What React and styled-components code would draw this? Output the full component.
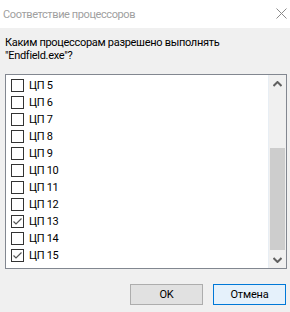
import React from 'react';
import styled, { createGlobalStyle } from 'styled-components';

const FONT = 'Roboto, "Noto Sans", "Liberation Sans", sans-serif';

const Global = createGlobalStyle`
    html, body {
        margin: 0;
        padding: 0;
        background: #f0f0f0;
    }
    body {
        font-family: ${FONT};
        font-size: 11px;
        letter-spacing: -0.3px;
    }
`;

const cpus = [
    { n: 5, on: false },
    { n: 6, on: false },
    { n: 7, on: false },
    { n: 8, on: false },
    { n: 9, on: false },
    { n: 10, on: false },
    { n: 11, on: false },
    { n: 12, on: false },
    { n: 13, on: true },
    { n: 14, on: false },
    { n: 15, on: true },
];

const App = () => {
    return (
        <Window>
            <Global />
            <TitleBar>
                <Title>Соответствие процессоров</Title>
                <Close>
                    <svg width="11" height="11" viewBox="0 0 11 11">
                        <path d="M0.5 0.5 L10.5 10.5 M10.5 0.5 L0.5 10.5" stroke="#8a8a8a" strokeWidth="1" fill="none" />
                    </svg>
                </Close>
            </TitleBar>
            <Body>
                <Label>
                    <div>Каким процессорам разрешено выполнять</div>
                    <div>"Endfield.exe"?</div>
                </Label>
                <ListBox>
                    <Items>
                        {cpus.map((c) => (
                            <Row key={c.n}>
                                <Box>
                                    {c.on && (
                                        <svg width="11" height="11" viewBox="0 0 11 11">
                                            <path d="M1.5 5.5 L4 8 L9.5 2.5" stroke="#555" strokeWidth="1.2" fill="none" />
                                        </svg>
                                    )}
                                </Box>
                                <span>ЦП {c.n}</span>
                            </Row>
                        ))}
                    </Items>
                    <ScrollBar>
                        <Arrow>
                            <svg width="9" height="6" viewBox="0 0 9 6">
                                <path d="M0.5 5 L4.5 1 L8.5 5" stroke="#606060" strokeWidth="2" fill="none" />
                            </svg>
                        </Arrow>
                        <Track>
                            <Thumb />
                        </Track>
                        <Arrow>
                            <svg width="9" height="6" viewBox="0 0 9 6">
                                <path d="M0.5 1 L4.5 5 L8.5 1" stroke="#606060" strokeWidth="2" fill="none" />
                            </svg>
                        </Arrow>
                    </ScrollBar>
                </ListBox>
                <Footer>
                    <Button>OK</Button>
                    <Button $focused>Отмена</Button>
                </Footer>
            </Body>
        </Window>
    );
};

const Window = styled.div`
    width: 290px;
    height: 312px;
    display: flex;
    flex-direction: column;
    background: #f0f0f0;
`;

const TitleBar = styled.div`
    height: 28px;
    background: #fff;
    display: flex;
    align-items: center;
    justify-content: space-between;
    padding: 0 3px 0 3px;
`;

const Title = styled.div`
    color: #a0a0a0;
    font-size: 11px;
    letter-spacing: -0.4px;
`;

const Close = styled.div`
    display: flex;
    align-items: center;
    margin-top: -2px;
`;

const Body = styled.div`
    flex: 1;
    display: flex;
    flex-direction: column;
    padding: 8px 3px 0 5px;
`;

const Label = styled.div`
    line-height: 13px;
    color: #000;
`;

const ListBox = styled.div`
    margin-top: 12px;
    height: 195px;
    box-sizing: border-box;
    border: 1px solid #828790;
    background: #fff;
    display: flex;
`;

const Items = styled.div`
    flex: 1;
    padding: 2px 0 0 5px;
`;

const Row = styled.div`
    height: 17px;
    display: flex;
    align-items: center;
    gap: 5px;
    color: #000;
`;

const Box = styled.div`
    width: 13px;
    height: 13px;
    box-sizing: border-box;
    border: 1px solid #333;
    background: #fff;
    display: flex;
    align-items: center;
    justify-content: center;
`;

const ScrollBar = styled.div`
    width: 17px;
    background: #f0f0f0;
    display: flex;
    flex-direction: column;
    border-left: 1px solid #e8eef4;
`;

const Arrow = styled.div`
    height: 17px;
    display: flex;
    align-items: center;
    justify-content: center;
`;

const Track = styled.div`
    flex: 1;
    display: flex;
    flex-direction: column;
    justify-content: flex-end;
    padding: 0 1px 1px 1px;
`;

const Thumb = styled.div`
    height: 102px;
    background: #cdcdcd;
`;

const Footer = styled.div`
    display: flex;
    justify-content: flex-end;
    gap: 10px;
    margin-top: 15px;
    padding-right: 1px;
`;

const Button = styled.button`
    width: 73px;
    height: 21px;
    box-sizing: border-box;
    font-family: ${FONT};
    font-size: 11px;
    letter-spacing: -0.2px;
    color: #000;
    padding: 0;
    border: 1px solid ${(p) => (p.$focused ? '#0078d7' : '#adadad')};
    background: ${(p) => (p.$focused ? '#e5f1fb' : '#e1e1e1')};
`;

export default App;
